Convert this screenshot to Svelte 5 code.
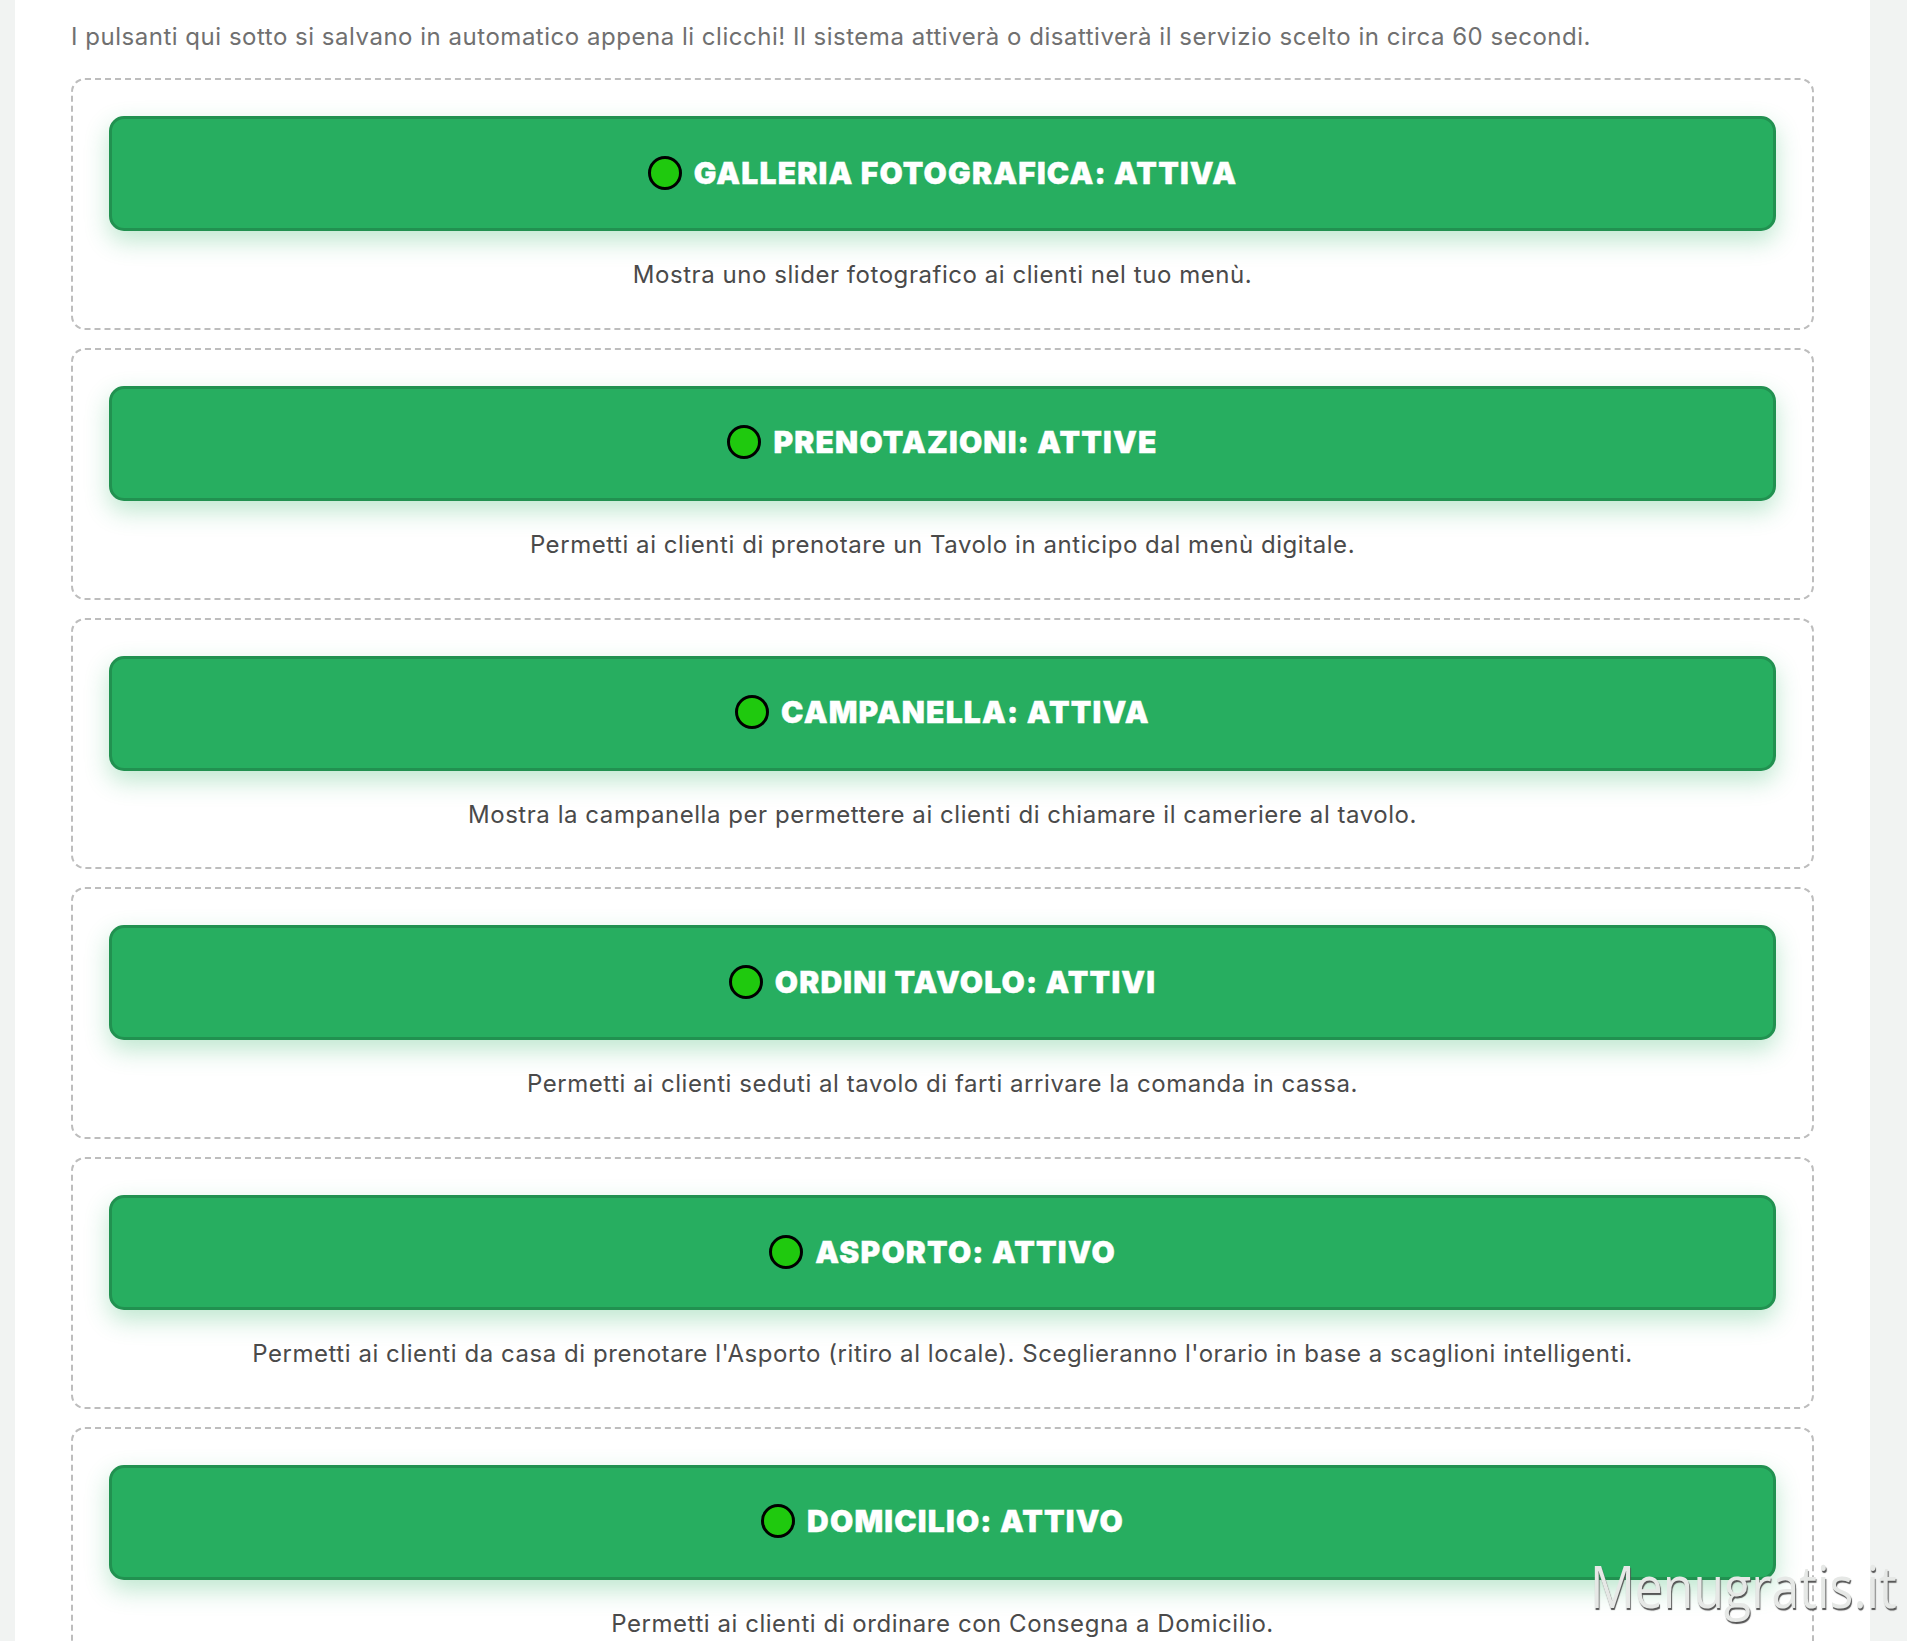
<script>
	const services = [
		{ title: 'GALLERIA FOTOGRAFICA: ATTIVA', text: 'Mostra uno slider fotografico ai clienti nel tuo menù.' },
		{ title: 'PRENOTAZIONI: ATTIVE', text: 'Permetti ai clienti di prenotare un Tavolo in anticipo dal menù digitale.' },
		{ title: 'CAMPANELLA: ATTIVA', text: 'Mostra la campanella per permettere ai clienti di chiamare il cameriere al tavolo.' },
		{ title: 'ORDINI TAVOLO: ATTIVI', text: 'Permetti ai clienti seduti al tavolo di farti arrivare la comanda in cassa.' },
		{ title: 'ASPORTO: ATTIVO', text: "Permetti ai clienti da casa di prenotare l'Asporto (ritiro al locale). Sceglieranno l'orario in base a scaglioni intelligenti." },
		{ title: 'DOMICILIO: ATTIVO', text: 'Permetti ai clienti di ordinare con Consegna a Domicilio.' }
	];
</script>

<div class="page">
	<main class="panel">
		<p class="intro">I pulsanti qui sotto si salvano in automatico appena li clicchi! Il sistema attiverà o disattiverà il servizio scelto in circa 60 secondi.</p>
		{#each services as s (s.title)}
			<section class="box">
				<button class="toggle">
					<span class="dot"></span>
					<span>{s.title}</span>
				</button>
				<p class="desc">{s.text}</p>
			</section>
		{/each}
	</main>
	<div class="mark">Menugratis.it</div>
</div>

<style>
	:global(body) {
		background: #f1f3f2;
	}
	.page {
		position: relative;
		height: 100vh;
		overflow: hidden;
		font-family: Inter, 'Noto Sans', sans-serif;
	}
	.panel {
		margin: 0 37px 0 15px;
		padding: 21px 56px 0;
		background: #fff;
		min-height: 100%;
		box-sizing: border-box;
	}
	.intro {
		margin: 0 0 25px;
		font-size: 24px;
		line-height: 32px;
		letter-spacing: 0.52px;
		color: #707070;
	}
	.box {
		height: 251.8px;
		box-sizing: border-box;
		margin-bottom: 18px;
		padding: 36px 36px 0;
		border: 2px dashed #bdbdbd;
		border-radius: 14px;
	}
	.toggle {
		display: flex;
		align-items: center;
		justify-content: center;
		gap: 12px;
		width: 100%;
		height: 115px;
		padding: 0 0 2px;
		border: 3px solid #219150;
		border-radius: 15px;
		background: #27ae60;
		box-shadow: 0 10px 25px rgba(39, 174, 96, 0.3);
		color: #fff;
		font-family: inherit;
		font-size: 30px;
		font-weight: 900;
		letter-spacing: 1.2px;
		-webkit-text-stroke: 0.4px #fff;
		cursor: pointer;
	}
	.dot {
		width: 34px;
		height: 34px;
		box-sizing: border-box;
		border: 3px solid #000;
		border-radius: 50%;
		background: #1fc90e;
	}
	.desc {
		margin: 27px 0 0;
		text-align: center;
		font-size: 24px;
		line-height: 34px;
		letter-spacing: 0.55px;
		color: #4a4a4a;
	}
	.mark {
		position: absolute;
		left: 1590px;
		top: 1546px;
		font-family: 'Open Sans', sans-serif;
		font-size: 58px;
		color: #e6e8e6;
		text-shadow: 1px 2px 1px #555;
		transform: scaleX(0.86);
		transform-origin: left;
	}
</style>
